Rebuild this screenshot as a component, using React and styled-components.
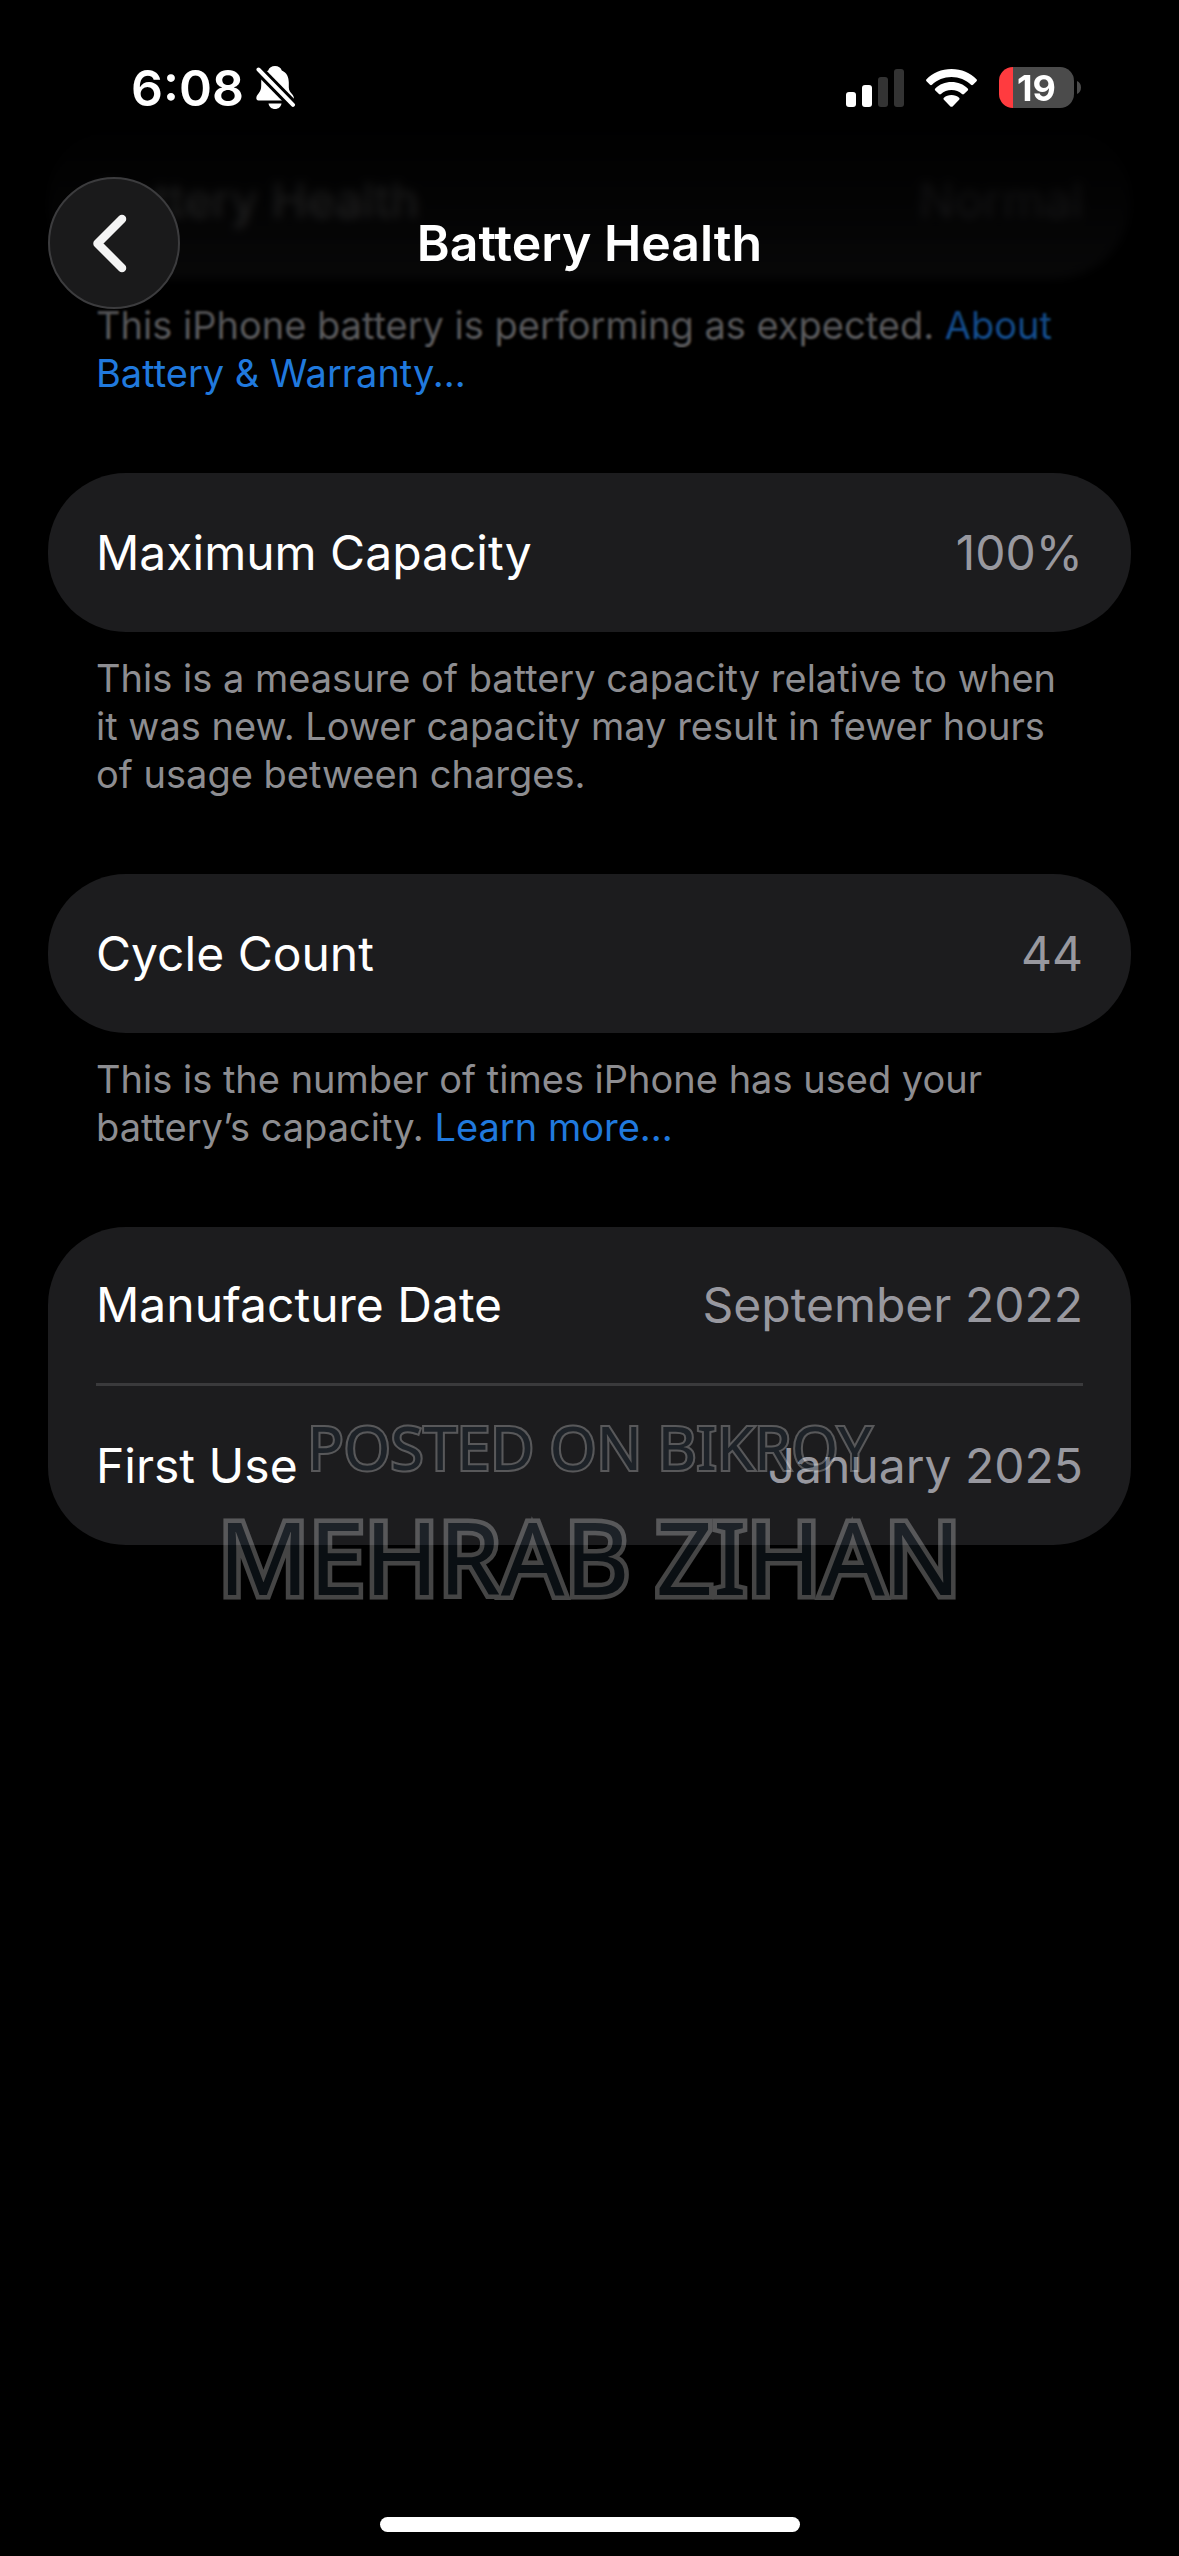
import React, { memo } from "react";
import styled, { createGlobalStyle, css } from "styled-components";

const GlobalStyle = createGlobalStyle`
    * {
        box-sizing: border-box;
    }
    body {
        margin: 0;
        background: #000;
        color: #fff;
        font-family: Inter, "Liberation Sans", sans-serif;
    }
`
const Page = styled.div`
    min-height: 100vh;
    position: relative;
    overflow: hidden;
    display: flex;
    flex-direction: column;
`
const Header = styled.header`
    position: absolute;
    top: 0;
    left: 0;
    right: 0;
    z-index: 2;
`
const Fade = styled.div`
    position: absolute;
    top: 0;
    left: 0;
    right: 0;
    height: ${props => props.$height}px;
    backdrop-filter: blur(${props => props.$blur}px);
    background: ${props => props.$fill};
`
const StatusBar = styled.div`
    position: relative;
    height: 177px;
    padding: 0 98px 2px 131px;
    display: flex;
    justify-content: space-between;
    align-items: center;
`
const StatusGroup = styled.div`
    display: flex;
    align-items: center;
    gap: ${props => props.$gap}px;
`
const Time = styled.time`
    font-size: 50px;
    font-weight: 600;
    line-height: 60px;
`
const BatteryShell = styled.div`
    display: flex;
    align-items: center;
    gap: 3px;
`
const BatteryBody = styled.div`
    width: 75px;
    height: 41px;
    border-radius: 14px;
    background: linear-gradient(to right, #ff3b3f ${props => props.$level}%, #4b4b4b ${props => props.$level}%);
    display: flex;
    align-items: center;
    justify-content: center;
    font-size: 36px;
    font-weight: 700;
    line-height: 40px;
`
const NavBar = styled.nav`
    position: relative;
    display: grid;
    grid-template-columns: 132px 1fr 132px;
    align-items: center;
    padding: 0 48px;
`
const BackButton = styled.button`
    width: 132px;
    height: 132px;
    padding: 0;
    border: 2px solid #3c3c3e;
    border-radius: 50%;
    background: #1a1a1b;
    display: flex;
    align-items: center;
    justify-content: center;
    cursor: pointer;
`
const Title = styled.h1`
    margin: 0;
    text-align: center;
    font-size: 50px;
    font-weight: 600;
    line-height: 60px;
`
const Content = styled.main`
    flex: 1;
    padding: 120px 48px 0;
`
const Section = styled.section`
    margin-bottom: 76px;
`
const Card = styled.dl`
    margin: 0;
    padding: 0 48px;
    border-radius: 78px;
    background: #1c1c1e;
`
const Row = styled.div`
    height: 159px;
    display: flex;
    align-items: center;
    justify-content: space-between;
    font-size: 48px;
    line-height: 60px;
    ${props => props.$divided && css`
        border-bottom: 3px solid #3a3a3c;
    `}
`
const Label = styled.dt`
    color: #fff;
`
const Value = styled.dd`
    margin: 0;
    color: #98989f;
`
const Note = styled.p`
    margin: 22px 0 0;
    padding: 0 48px;
    color: #8d8d91;
    font-size: 38px;
    line-height: 48px;
`
const NoteLink = styled.a`
    color: #2079dd;
    text-decoration: none;
`
const Watermark = styled.div`
    position: absolute;
    top: 55vh;
    left: 0;
    right: 0;
    z-index: 3;
    display: flex;
    flex-direction: column;
    align-items: center;
    opacity: 0.3;
    pointer-events: none;
    font-family: "Noto Sans", sans-serif;
    color: #21323f;
`
const WatermarkLine = styled.span`
    font-size: ${props => props.$size}px;
    line-height: ${props => props.$line}px;
    -webkit-text-stroke: ${props => props.$stroke}px #e3e3e3;
    paint-order: stroke fill;
`
const HomeIndicator = styled.div`
    align-self: center;
    width: 420px;
    height: 15px;
    margin-bottom: 24px;
    border-radius: 8px;
    background: #fff;
`

const BellOffIcon = () => (
    <svg width="40" height="44" viewBox="0 0 40 44" aria-label="Silent mode">
        <path fill="#fff" d="M19 0c3.400 0 5.800 1.800 6.800 4.400 5 2.200 7 6.600 7 12.200v4.600c0 3.200 1.600 5 3.400 7 1.300 1.500 2 3.300 1.600 4.800-.3 1-1 1.600-2 1.600H2.600C.8 34.600 0 33 .4 31.200 1 28 5.200 26.400 5.200 20v-3.400c0-5.600 2-10 7-12.200C13.200 1.800 15.600 0 19 0Z" />
        <path fill="#fff" d="M12.500 37.500h13c-.6 3.300-3.100 5.500-6.500 5.500s-5.900-2.200-6.500-5.500Z" />
        <path stroke="#000" strokeWidth="10" d="M-4-3 42 44" />
        <path stroke="#fff" strokeWidth="4" strokeLinecap="round" d="M2.500 3.500 37 38.800" />
    </svg>
)

const SignalIcon = () => (
    <svg width="58" height="38" viewBox="0 0 58 38" aria-label="Signal">
        <rect x="0" y="23" width="10" height="15" rx="3" fill="#fff" />
        <rect x="16" y="16" width="10" height="22" rx="3" fill="#fff" />
        <rect x="32" y="8" width="10" height="30" rx="3" fill="#333" />
        <rect x="48" y="0" width="10" height="38" rx="3" fill="#333" />
    </svg>
)

const WifiIcon = () => (
    <svg width="51" height="38" viewBox="0 0 51 38" aria-label="Wi-Fi">
        <path fill="#fff" d="M25.500 0C35.500 0 44.500 4 50.500 10.200c.6.600.6 1.400 0 2L47 15.800c-.6.600-1.400.6-2 0C40 11 33 8 25.500 8S11 11 6 15.800c-.6.600-1.400.6-2 0L.5 12.200c-.6-.6-.6-1.400 0-2C6.500 4 15.500 0 25.500 0Z" />
        <path fill="#fff" d="M25.500 13c6.400 0 12 2.400 16.200 6.400.6.600.6 1.400 0 2L38 25c-.6.600-1.400.6-2 0-2.800-2.500-6.400-4-10.500-4S17.800 22.500 15 25c-.6.600-1.400.6-2 0l-3.700-3.600c-.6-.6-.6-1.400 0-2C13.500 15.400 19.100 13 25.500 13Z" />
        <path fill="#fff" d="M25.500 26c3 0 5.600 1 7.600 2.800.6.600.6 1.300 0 1.900l-6.500 6.700c-.6.600-1.600.6-2.200 0l-6.500-6.700c-.6-.6-.6-1.300 0-1.900 2-1.800 4.600-2.800 7.600-2.800Z" />
    </svg>
)

const ChevronIcon = () => (
    <svg width="128" height="128" viewBox="0 0 128 128">
        <path d="M72 40 47.500 64.500 72 89" fill="none" stroke="#f4f4f4" strokeWidth="8.500" strokeLinecap="round" strokeLinejoin="round" />
    </svg>
)

const Battery = ({ level }) => (
    <BatteryShell>
        <BatteryBody $level={level}>{level}</BatteryBody>
        <svg width="4" height="13" viewBox="0 0 4 13">
            <path fill="#4b4b4b" d="M0 0c2.500 1 4 3.500 4 6.500S2.500 12 0 13Z" />
        </svg>
    </BatteryShell>
)

const ListRow = memo(props => (
    <Row $divided={props.divided}>
        <Label>{props.label}</Label>
        <Value>{props.value}</Value>
    </Row>
));

const App = () => (
    <Page>
        <GlobalStyle />
        <Header>
            <Fade $height={348} $blur={1} $fill="linear-gradient(to bottom, transparent 280px, rgba(0, 0, 0, 0.5) 290px, rgba(0, 0, 0, 0.3))" />
            <Fade $height={288} $blur={5} $fill="linear-gradient(to bottom, #000 110px, rgba(0, 0, 0, 0.88) 200px, rgba(0, 0, 0, 0.7) 288px)" />
            <StatusBar>
                <StatusGroup $gap={12}>
                    <Time>6:08</Time>
                    <BellOffIcon />
                </StatusGroup>
                <StatusGroup $gap={22}>
                    <SignalIcon />
                    <WifiIcon />
                    <Battery level={19} />
                </StatusGroup>
            </StatusBar>
            <NavBar>
                <BackButton aria-label="Back">
                    <ChevronIcon />
                </BackButton>
                <Title>Battery Health</Title>
            </NavBar>
        </Header>
        <Content>
            <Section>
                <Card>
                    <ListRow label="Battery Health" value="Normal" />
                </Card>
                <Note>
                    This iPhone battery is performing as expected. <NoteLink href="#about">About Battery &amp; Warranty...</NoteLink>
                </Note>
            </Section>
            <Section>
                <Card>
                    <ListRow label="Maximum Capacity" value="100%" />
                </Card>
                <Note>
                    This is a measure of battery capacity relative to when it was new. Lower capacity may result in fewer hours of usage between charges.
                </Note>
            </Section>
            <Section>
                <Card>
                    <ListRow label="Cycle Count" value="44" />
                </Card>
                <Note>
                    This is the number of times iPhone has used your battery’s capacity. <NoteLink href="#cycles">Learn more...</NoteLink>
                </Note>
            </Section>
            <Section>
                <Card>
                    <ListRow label="Manufacture Date" value="September 2022" divided />
                    <ListRow label="First Use" value="January 2025" />
                </Card>
            </Section>
        </Content>
        <Watermark aria-hidden="true">
            <WatermarkLine $size={60} $line={82} $stroke={4}>POSTED ON BIKROY</WatermarkLine>
            <WatermarkLine $size={100} $line={136} $stroke={9}>MEHRAB ZIHAN</WatermarkLine>
        </Watermark>
        <HomeIndicator />
    </Page>
);

export default App;
